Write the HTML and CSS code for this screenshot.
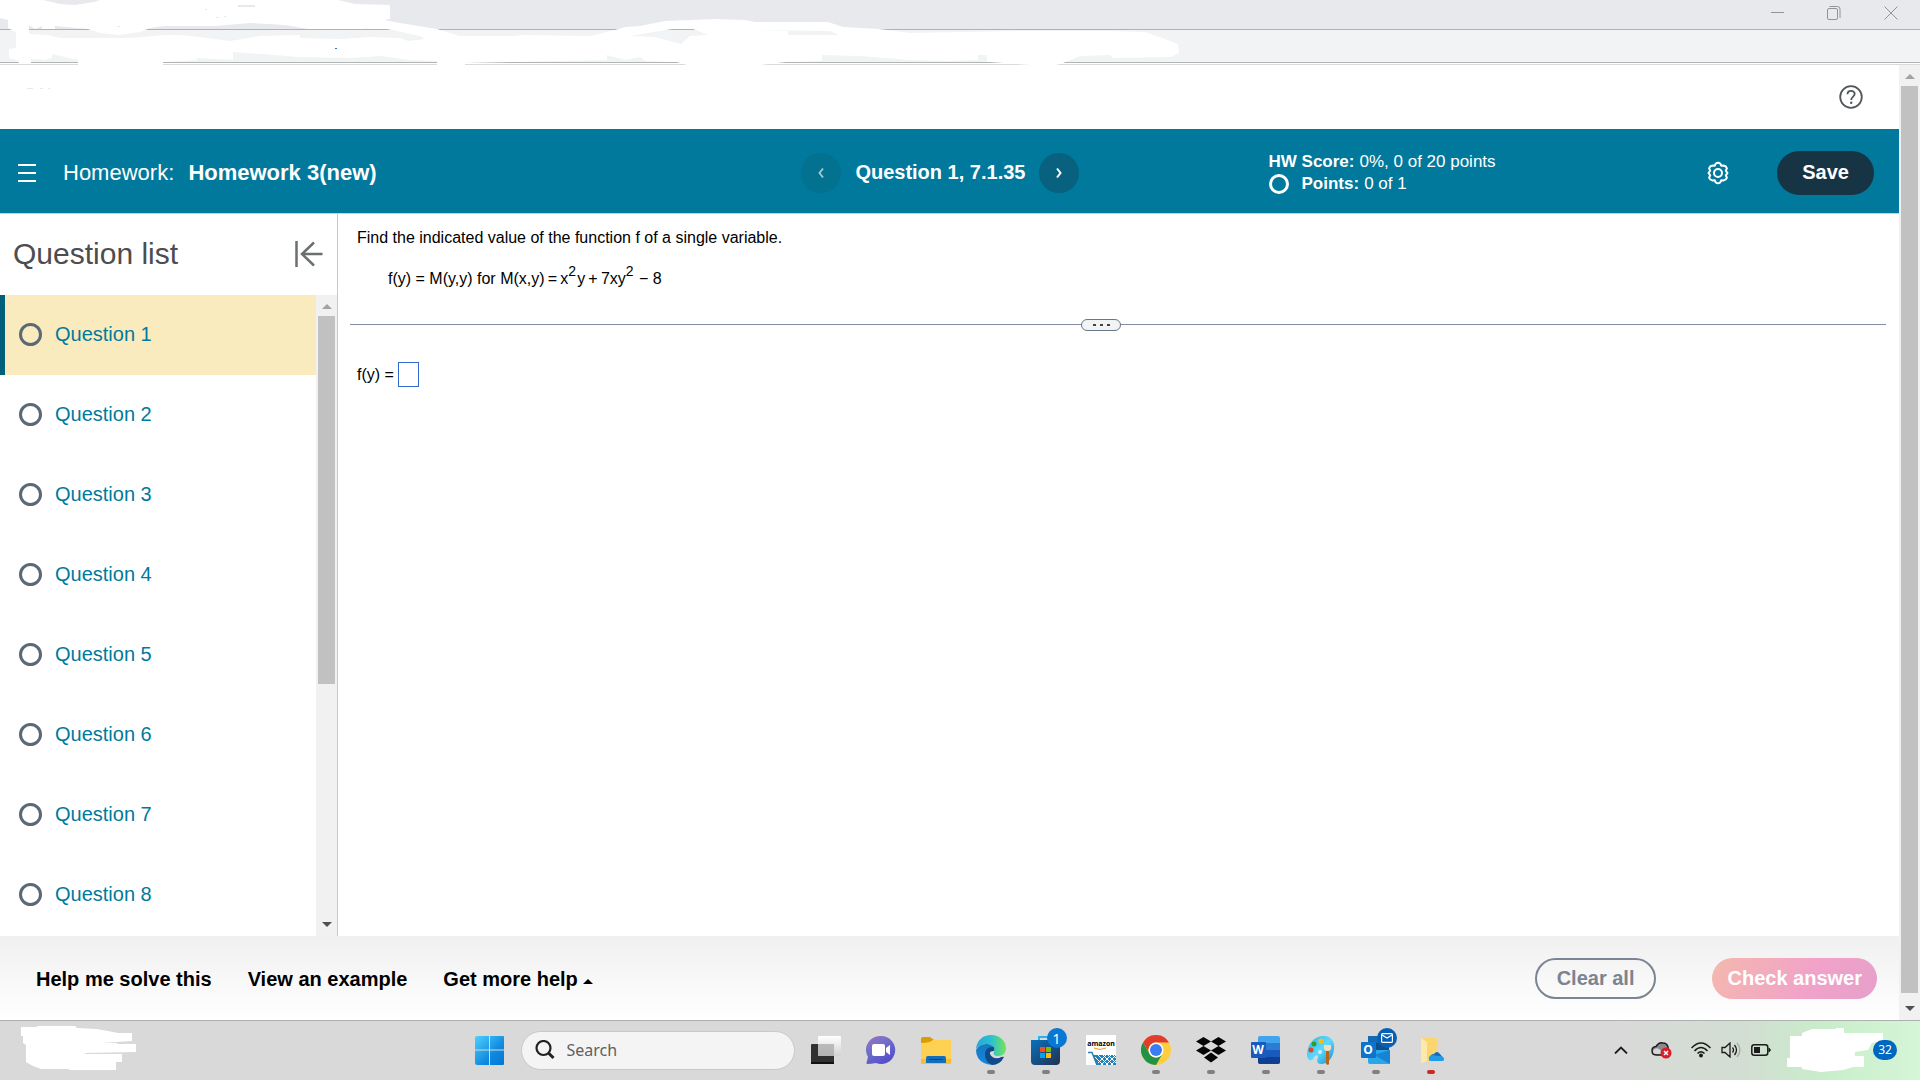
FILE: index.html
```html
<!DOCTYPE html>
<html lang="en">
<head>
    <meta charset="UTF-8">
    <meta name="viewport" content="width=device-width, initial-scale=1.0">
    <title>Homework 3(new)</title>
    <link rel="stylesheet" href="styles.css">
</head>
<body>

    <!-- Browser window -->
    <div class="browser">
        <div class="title-bar">
            <button class="win-btn" aria-label="Minimize"><svg width="14" height="14" viewBox="0 0 14 14"><path d="M1 6.500h13"/></svg></button>
            <button class="win-btn" aria-label="Restore"><svg width="14" height="14" viewBox="0 0 14 14"><rect x=".5" y="2.500" width="10" height="11" rx="1.500"/><path d="M2.500 .5h8q2.500 0 2.500 2.500v9"/></svg></button>
            <button class="win-btn" aria-label="Close"><svg width="14" height="14" viewBox="0 0 14 14"><path d="M.5 .5l13 13M13.500 .5l-13 13"/></svg></button>
        </div>
        <div class="tool-bar"></div>
        <svg class="paint" width="1200" height="95" viewBox="0 0 1200 95">
            <path fill="#fff" fill-rule="evenodd" d="M0 0H43L60 4 75 5 94 2 100 0H338L355 4 390 5V19L384 20 400 23 437 29 460 36H515L522 35 590 36 615 30 625 27 640 26 665 21 715 19 745 20 755 22H828L843 27 879 29 910 33 1020 31H1110L1145 32 1165 39 1178 44 1179 53 1170 57 1113 58 1110 55 1080 56 1063 63 1056 65H1030L990 62 975 60 950 61 910 60 860 56 822 55V61L786 62 760 65H687L677 62 646 61 640 57 625 60 607 55V60L560 61 465 63V65H437V61L410 60 380 56 350 58 300 57 233 52V60L197 58V60L163 62V65H78V60L52 54V58L45 60 31 59V63H19L17 60 9 58V49L16 48V32L8 28V20L0 18ZM29 25L35 29 42 26V29H55V26L88 29 100 33 120 35 140 32 150 28 165 26H215L250 23 285 25 308 29H368L360 26 367 29H387L420 36 425 39 408 41 400 38 370 37 340 39 300 38V35L260 36 230 41 200 37 180 35 165 35 130 38 60 38 48 35 29 34ZM672 29H693L708 35 690 36 681 44 655 37 630 36ZM757 30L830 31 839 35 788 35V31ZM978 55H987V61H978Z"/>
            <g fill="#e8e9ed">
                <rect x="205" y="9" width="2" height="1"/><rect x="238" y="5" width="17" height="2"/><rect x="216" y="17" width="3" height="1"/><rect x="224" y="16" width="2" height="1"/><rect x="117" y="26" width="3" height="1"/>
                <rect x="27" y="88" width="6" height="1"/><rect x="40" y="88" width="3" height="1"/><rect x="48" y="88" width="2" height="1"/>
            </g>
            <rect x="335" y="48" width="2" height="1" fill="#3b78b8"/>
        </svg>
    </div>

    <div class="viewport">
        <div class="page">

            <div class="top-bar">
                <button class="icon-btn" aria-label="Help">
                    <svg width="24" height="24" viewBox="0 0 24 24" fill="none" stroke="#505759" stroke-width="1.800"><circle cx="12" cy="12" r="10.800"/><path d="M8.500 9.300C8.500 4.800 15.700 4.800 15.700 9.100 15.700 11.600 12.200 11.800 12.200 15"/><circle cx="12.200" cy="17.800" r="1.200" fill="#505759" stroke="none"/></svg>
                </button>
            </div>

            <header class="header">
                <div class="header-left">
                    <button class="icon-btn" aria-label="Menu">
                        <svg width="19" height="18" viewBox="0 0 19 18" stroke="#fff" stroke-width="2"><path d="M0 1h18M0 9h18M0 17h18"/></svg>
                    </button>
                    <h1 class="title"><span>Homework:</span> <strong>Homework 3(new)</strong></h1>
                </div>
                <div class="question-nav">
                    <button class="nav-btn disabled" aria-label="Previous"><svg width="8" height="12" viewBox="0 0 8 12"><path d="M6 1.500L2.500 6 6 10.500"/></svg></button>
                    <strong>Question 1, 7.1.35</strong>
                    <button class="nav-btn" aria-label="Next"><svg width="8" height="12" viewBox="0 0 8 12"><path d="M2 1.500L5.500 6 2 10.500"/></svg></button>
                </div>
                <div class="score">
                    <p><strong>HW Score:</strong> 0%, 0 of 20 points</p>
                    <p><span class="ring"></span><strong>Points:</strong> 0 of 1</p>
                </div>
                <div class="header-right">
                    <button class="icon-btn" aria-label="Settings">
                        <svg width="24" height="24" viewBox="0 0 24 24" fill="none" stroke="#fff" stroke-width="2" stroke-linejoin="round"><path d="M9.800 2.500Q12 1 14.200 2.500L15.200 4.700 17.500 4.600Q20.200 5 20.900 7.300L19.800 9.700 21.500 12 19.800 14.300 20.900 16.700Q20.200 19 17.500 19.400L15.200 19.300 14.200 21.500Q12 23 9.800 21.500L8.800 19.300 6.500 19.400Q3.800 19 3.100 16.700L4.200 14.300 2.500 12 4.200 9.700 3.100 7.300Q3.800 5 6.500 4.600L8.800 4.700Z"/><circle cx="12" cy="12" r="4"/></svg>
                    </button>
                    <button class="save">Save</button>
                </div>
            </header>

            <div class="content">
                <aside class="sidebar">
                    <div class="sidebar-head">
                        <h2>Question list</h2>
                        <button class="icon-btn" aria-label="Collapse list">
                            <svg width="28" height="26" viewBox="0 0 28 26" fill="none" stroke="#6a7070" stroke-width="2.500"><path d="M1.500 0v26M27.500 13H7M19 1.500L7 13l12 11.500"/></svg>
                        </button>
                    </div>
                    <div class="list-wrap">
                        <ul class="questions">
                            <li class="active"><span class="ring"></span><a href="#">Question 1</a></li>
                            <li><span class="ring"></span><a href="#">Question 2</a></li>
                            <li><span class="ring"></span><a href="#">Question 3</a></li>
                            <li><span class="ring"></span><a href="#">Question 4</a></li>
                            <li><span class="ring"></span><a href="#">Question 5</a></li>
                            <li><span class="ring"></span><a href="#">Question 6</a></li>
                            <li><span class="ring"></span><a href="#">Question 7</a></li>
                            <li><span class="ring"></span><a href="#">Question 8</a></li>
                        </ul>
                        <div class="scrollbar list-scroll">
                            <span class="arrow up"></span>
                            <div class="track"><div class="thumb"></div></div>
                            <span class="arrow down"></span>
                        </div>
                    </div>
                </aside>

                <main class="exercise">
                    <p class="statement">Find the indicated value of the function f of a single variable.</p>
                    <p class="formula">f(y) = M(y,y) for M(x,y)&thinsp;=&thinsp;x<sup>2</sup>y&thinsp;+&thinsp;7xy<sup>2</sup> − 8</p>
                    <div class="divider">
                        <button class="handle" aria-label="Resize"><i></i><i></i><i></i></button>
                    </div>
                    <div class="answer">
                        <label for="answer">f(y) =</label>
                        <input type="text" id="answer">
                    </div>
                </main>
            </div>

            <footer class="footer">
                <div class="help-links">
                    <button>Help me solve this</button>
                    <button>View an example</button>
                    <button>Get more help <span class="caret"></span></button>
                </div>
                <div class="actions">
                    <button class="clear">Clear all</button>
                    <button class="check">Check answer</button>
                </div>
            </footer>
        </div>

        <div class="scrollbar page-scroll">
            <span class="arrow up"></span>
            <div class="track"><div class="thumb"></div></div>
            <span class="arrow down"></span>
        </div>
    </div>

    <!-- Taskbar -->
    <div class="taskbar">
        <div class="task-left">
            <svg width="116" height="46" viewBox="0 0 116 46"><path fill="#fff" d="M0 1H16V0H54L56 2 75 3 87 5 97 7H111V15L96 16 80 17H96V18H115V26L64 27V28H101V36H95V44H48V43H20L12 40 5 36V19L2 17V10H0Z"/></svg>
        </div>

        <div class="task-center">
            <button class="app" aria-label="Start">
                <svg width="30" height="30" viewBox="0 0 30 30">
                    <defs><linearGradient id="win" x1="0" y1="0" x2="30" y2="30" gradientUnits="userSpaceOnUse"><stop offset="0" stop-color="#4fd3ff"/><stop offset=".6" stop-color="#128ae0"/><stop offset="1" stop-color="#0075d3"/></linearGradient></defs>
                    <path fill="url(#win)" d="M2 1H14V14.500H0V3Q0 1 2 1ZM15 1H28Q29 1 29 2V14.500H15ZM0 15.500H14V30H2Q0 30 0 28ZM15 15.500H29V29Q29 30 28 30H15Z"/>
                </svg>
            </button>
            <label class="search">
                <svg width="20" height="20" viewBox="0 0 20 20" fill="none" stroke="#222" stroke-width="2.200"><circle cx="8.500" cy="8" r="7"/><path d="M13.500 13l5 5" stroke-width="3"/></svg>
                <input type="text" placeholder="Search" aria-label="Search">
            </label>
            <div class="apps">
                <button class="app" aria-label="Task view">
                    <svg width="30" height="30" viewBox="0 0 30 30">
                        <defs><linearGradient id="tv" x2="0" y2="1"><stop stop-color="#fff"/><stop offset="1" stop-color="#d2d2d2"/></linearGradient></defs>
                        <rect y="9" width="23" height="20" rx="1" fill="#30302e"/><rect y="27" width="23" height="2" fill="#111"/><rect x="7" y="1" width="23" height="20" rx="1" fill="url(#tv)"/><path fill="#aaa" d="M7 9h16v12H7z" opacity=".75"/>
                    </svg>
                </button>
                <button class="app" aria-label="Chat">
                    <svg width="30" height="30" viewBox="0 0 30 30">
                        <defs><linearGradient id="ch" x1="0" y1="0" x2=".6" y2="1"><stop stop-color="#a26fb8"/><stop offset=".4" stop-color="#7471cc"/><stop offset="1" stop-color="#5350c8"/></linearGradient></defs>
                        <path fill="url(#ch)" d="M15 1A14 14 0 1 1 10 28Q5 29 1 29 0 28 1 26L2 22A14 14 0 0 1 15 1Z"/><rect x="6" y="9" width="13" height="12" rx="2" fill="#fff"/><path d="M20 13l4-3v10l-4-3z" fill="#fff"/>
                    </svg>
                </button>
                <button class="app" aria-label="File Explorer">
                    <svg width="30" height="30" viewBox="0 0 30 30">
                        <path fill="#dc9c00" d="M0 4Q0 2 2 2H9L13 5V10H0Z"/><path fill="#ffd153" d="M0 8Q9 8 12 5H29Q30 5 30 6V28H0Z"/><path fill="#f7bc30" d="M0 24h30v4q0 1-1 1H1q-1 0-1-1z"/><path fill="#116fbd" d="M5 23Q5 21 7 21H23Q25 21 25 23V28H5Z"/><rect x="8" y="24" width="14" height="1" fill="#0d437c"/>
                    </svg>
                </button>
                <button class="app running" aria-label="Edge">
                    <svg width="30" height="30" viewBox="0 0 30 30">
                        <defs><linearGradient id="ed"><stop stop-color="#24a8de"/><stop offset=".5" stop-color="#29c0d3"/><stop offset="1" stop-color="#75e552"/></linearGradient><linearGradient id="eb" x2="0" y2="1"><stop stop-color="#147bbd"/><stop offset="1" stop-color="#1684e3"/></linearGradient></defs>
                        <path fill="url(#ed)" d="M0 14C1 5 7 0 15 0 24 0 30 6 30 13 30 18 27 21 22 21 18 21 17 19 18 17 20 12 15 9 10 9Q4 9 0 14Z"/>
                        <path fill="url(#eb)" d="M0 15Q3 9 10 9C16 9 20 13 18 16Q16 12 12 15 9 18 12 24 15 29 20 29 14 31 8 28 0 24 0 15Z"/>
                        <path fill="#114a8b" d="M18 12Q9 11 9 20 9 27 16 30 24 30 28 22 27 21 23 23 16 24 14 19 13 16 18 16Z"/>
                    </svg>
                </button>
                <button class="app running" aria-label="Microsoft Store">
                    <svg width="30" height="30" viewBox="0 0 30 30">
                        <defs><linearGradient id="st" x2="1" y2="1"><stop stop-color="#0872bd"/><stop offset="1" stop-color="#22304f"/></linearGradient></defs>
                        <path fill="none" stroke="#23b7ed" stroke-width="2" d="M8 7V2h12v5"/><path fill="url(#st)" d="M0 5H29V26Q29 30 25 30H4Q0 30 0 26Z"/><path fill="#f25022" d="M9 12h5v5H9z"/><path fill="#7fba00" d="M15 12h5v5h-5z"/><path fill="#00a4ef" d="M9 18h5v5H9z"/><path fill="#ffb900" d="M15 18h5v5h-5z"/>
                    </svg>
                    <span class="badge">1</span>
                </button>
                <button class="app" aria-label="Amazon">
                    <svg width="30" height="30" viewBox="0 0 30 30">
                        <rect width="30" height="30" fill="#fff"/><text class="amazon-text" x="15" y="11" text-anchor="middle">amazon</text><path d="M8 13q6 3 12 0" fill="none" stroke="#f59b22"/><path d="M2 17.500h4l5 12.500" fill="none" stroke="#2780b6" stroke-width="1.500"/><path fill="#2780b6" d="M7 20h23v10H11z"/><path d="M9 22l8 8M12 20l10 10M17 20l10 10M22 20l8 8M27 20l3 3M12 28l8-8M15 30l10-10M20 30l10-10M25 30l5-5" stroke="#fff"/>
                    </svg>
                </button>
                <button class="app running" aria-label="Chrome">
                    <svg width="30" height="30" viewBox="0 0 30 30">
                        <circle cx="15" cy="15" r="15" fill="#ffcd40"/><path fill="#e33b2e" d="M2 7.500A15 15 0 0 1 28 7.500H15A7.500 7.500 0 0 0 8.500 18.750Z"/><path fill="#229342" d="M2 7.500A15 15 0 0 0 15 30L21.500 18.750A7.500 7.500 0 0 1 8.500 18.750Z"/><circle cx="15" cy="15" r="7.500" fill="#fff"/><circle cx="15" cy="15" r="6" fill="#3a7df0"/>
                    </svg>
                </button>
                <button class="app running" aria-label="Dropbox">
                    <svg width="30" height="30" viewBox="0 0 30 30"><path d="M7.500 2L15 6.500 7.500 11 0 6.500ZM22.500 2L30 6.500 22.500 11 15 6.500ZM7.500 11L15 15.500 7.500 20 0 15.500ZM22.500 11L30 15.500 22.500 20 15 15.500ZM15 17.500L22 22.500 15 27.500 8 22.500Z" fill="#050505"/></svg>
                </button>
                <button class="app running" aria-label="Word">
                    <svg width="30" height="30" viewBox="0 0 30 30"><rect x="7" y="1" width="22" height="28" rx="2" fill="#41a5ee"/><path fill="#2b7cd3" d="M7 8h22v7H7z"/><path fill="#185abd" d="M7 15h22v7H7z"/><path fill="#103f91" d="M7 22h22v5q0 2-2 2H9q-2 0-2-2z"/><rect y="7" width="15" height="16" rx="1" fill="#185abd"/><text class="office-text" x="7" y="19" text-anchor="middle">W</text></svg>
                </button>
                <button class="app running" aria-label="Paint">
                    <svg width="30" height="30" viewBox="0 0 30 30">
                        <defs><linearGradient id="pa" x2="1" y2="1"><stop stop-color="#2ab4e8"/><stop offset=".5" stop-color="#5fd9fb"/><stop offset="1" stop-color="#168dcd"/></linearGradient></defs>
                        <path fill="url(#pa)" d="M18 1C26 1 29 8 28 14 27 23 22 29 15 29 10 29 11 25 12 22 12 19 9 20 7 24 5 27 1 25 1 20 1 9 8 1 18 1Z"/><circle cx="15" cy="6" r="2.500" fill="#f7bd21"/><circle cx="8" cy="9" r="2.500" fill="#2ba12a"/><circle cx="5" cy="15" r="2.500" fill="#da4928"/><circle cx="14" cy="17" r="2" fill="#c8f2fb"/><path fill="#f2dcc1" d="M18 10h7v4l-2 2h-3l-2-2z"/><path fill="#b8651b" d="M20 16h3v13l-1 1-2-1z"/>
                    </svg>
                </button>
                <button class="app running" aria-label="Outlook">
                    <svg width="30" height="30" viewBox="0 0 30 30"><rect x="7" y="1" width="21" height="20" fill="#126bb3"/><path fill="#0f4f8c" d="M14 8h14v10H14z"/><path fill="#28a8ea" d="M7 15l22 0v12q0 2-2 2H9q-2 0-2-2z"/><path fill="#1684d3" d="M29 15v14L13 20z"/><rect y="7" width="15" height="16" rx="1" fill="#0f73cc"/><text class="office-text" x="7" y="19" text-anchor="middle">O</text></svg>
                    <span class="badge mail"><svg width="12" height="10" viewBox="0 0 12 10" fill="none" stroke="#fff" stroke-width="1.200"><rect x=".6" y=".6" width="10.800" height="8.800" rx="1"/><path d="M1 2l5 3 5-3"/></svg></span>
                </button>
                <button class="app alert" aria-label="OneDrive">
                    <svg width="30" height="30" viewBox="0 0 30 30"><path fill="#fbd56d" d="M6 3h15v23H6z"/><path fill="#ffe9a9" d="M5 3l6 4v18q0 2-2 2l-4 1z"/><path fill="#0f6cbf" d="M14 24q0-5 4-5 3-4 6 0l4 5z"/><path fill="#229ae7" d="M13 25q-1-5 4-5 4 1 7 1 4 0 4 4 0 1-2 1H15q-2 0-2-1z"/></svg>
                </button>
            </div>
        </div>

        <div class="tray">
            <svg width="14" height="8" viewBox="0 0 14 8" fill="none" stroke="#1b1b1b" stroke-width="1.800"><path d="M1 7.500L7 1.500l6 6"/></svg>
            <svg width="21" height="18" viewBox="0 0 21 18"><path fill="#8a8a8a" stroke="#1c1c1c" stroke-width="1.400" d="M5 14Q1 14 1 9.500 1 6 5 5.500 8 1 12 2q4 0 5 4l1 8z"/><path fill="#d7d7d7" d="M2 10q2-4 6-2l6 5H5Q2 13 2 10z"/><circle cx="15" cy="12" r="5.500" fill="#d71f2c"/><path stroke="#fff" stroke-width="1.500" d="M13 10l4 4M17 10l-4 4"/></svg>
            <svg width="20" height="16" viewBox="0 0 20 16" fill="none" stroke="#1b1b1b" stroke-width="1.500"><path d="M.5 6Q10-4 19.500 6M3.500 9Q10 2 16.500 9M6.500 11.500Q10 8 13.500 11.500"/><circle cx="10" cy="13.500" r="1.200" fill="#1b1b1b"/></svg>
            <svg width="20" height="16" viewBox="0 0 20 16" fill="none" stroke="#1b1b1b" stroke-width="1.300"><path d="M1 5.500h3L9 1v14l-5-4.500H1zM11.500 5.500q2 2.500 0 5M13.500 3q4 5 0 10"/><path d="M16 1q6 7 0 14" stroke="#aaa"/></svg>
            <svg width="20" height="12" viewBox="0 0 20 12"><rect x=".8" y=".8" width="16" height="10.400" rx="2.500" fill="none" stroke="#1b1b1b" stroke-width="1.500"/><path d="M3 3h6v6H3zM17.500 4h1l1.500 2-1.500 2h-1z" fill="#1b1b1b"/></svg>
            <div class="clock">
                <svg width="97" height="44" viewBox="0 0 97 44"><path fill="#fff" d="M3 8H15V5L25 1H49V0H57V5H96V13L85 15 81 22 68 24V28H77V39H66L56 42 34 44 15 41V39H0V30H3Z"/></svg>
                <span class="notif">32</span>
            </div>
        </div>
    </div>

</body>
</html>
```
FILE: styles.css
```css
* {
    box-sizing: border-box;
}

body {
    display: flex;
    flex-direction: column;
    height: 100vh;
    margin: 0;
    overflow: hidden;
    font-family: "Liberation Sans", Arial, sans-serif;
    font-size: 20px;
    background-color: #fff;
}

h1, h2, p, ul {
    margin: 0;
    padding: 0;
}

button {
    padding: 0;
    border: none;
    background: none;
    font: inherit;
    color: inherit;
    cursor: pointer;
}

svg {
    display: block;
}

/* Browser window */
.browser {
    position: relative;
    border-bottom: 1px solid #d9dbda;
}

.title-bar {
    display: flex;
    justify-content: flex-end;
    align-items: center;
    gap: 43px;
    height: 30px;
    padding: 0 22px 3px;
    background-color: #e8e9ed;
    border-bottom: 1px solid #b1b3b3;
}

.win-btn svg {
    fill: none;
    stroke: #929498;
}

.tool-bar {
    height: 33px;
    margin-bottom: 1px;
    background-color: #f1f3f4;
    border-bottom: 1px solid #b0b5b3;
}

.paint {
    position: absolute;
    top: 0;
    left: 0;
}

.viewport {
    display: flex;
    flex: 1;
    min-height: 0;
}

.page {
    display: flex;
    flex: 1;
    flex-direction: column;
    min-width: 0;
}

.top-bar {
    display: flex;
    justify-content: flex-end;
    align-items: center;
    height: 64px;
    padding-right: 36px;
}

/* Header */
.header {
    display: grid;
    grid-template-columns: 42.2% 24.6% 1fr auto;
    align-items: center;
    height: 85px;
    padding-top: 3px;
    background-color: #00799c;
    border-bottom: 1px solid #c2d3df;
    color: #fff;
}

.header-left {
    display: flex;
    align-items: center;
    gap: 26px;
    padding-left: 18px;
}

.title {
    font-size: 22px;
    font-weight: normal;
}

.title span {
    margin-right: 8px;
}

.question-nav {
    display: flex;
    align-items: center;
    gap: 14px;
}

.nav-btn {
    display: flex;
    align-items: center;
    justify-content: center;
    width: 40px;
    height: 40px;
    border-radius: 50%;
    background-color: #08627f;
}

.nav-btn svg {
    fill: none;
    stroke: #fff;
    stroke-width: 2;
}

.nav-btn.disabled {
    background-color: #037190;
}

.nav-btn.disabled svg {
    opacity: 0.6;
}

.score {
    font-size: 17px;
    line-height: 22px;
}

.score p {
    display: flex;
    align-items: center;
    gap: 5px;
}

.ring {
    width: 23px;
    height: 23px;
    border: 3px solid #5c6875;
    border-radius: 50%;
}

.score .ring {
    width: 20px;
    height: 20px;
    margin-right: 8px;
    border-color: #fff;
}

.header-right {
    display: flex;
    align-items: center;
    gap: 47px;
    padding-right: 25px;
}

.save {
    height: 44px;
    padding: 0 25px;
    border-radius: 22px;
    background-color: #173445;
    font-weight: bold;
}

.content {
    display: flex;
    flex: 1;
    min-height: 0;
}

/* Question list */
.sidebar {
    display: flex;
    flex-direction: column;
    width: 338px;
    border-right: 1px solid #c7c9d1;
}

.sidebar-head {
    display: flex;
    justify-content: space-between;
    align-items: center;
    height: 81px;
    padding: 0 14px 2px 13px;
    color: #4d4d4f;
}

.sidebar-head h2 {
    font-size: 30px;
    font-weight: normal;
}

.list-wrap {
    display: flex;
    flex: 1;
    min-height: 0;
}

.questions {
    flex: 1;
    overflow: hidden;
    list-style: none;
}

.questions li {
    display: flex;
    align-items: center;
    gap: 13px;
    height: 80px;
    padding: 0 0 2px 14px;
    border-left: 5px solid transparent;
}

.questions li.active {
    border-left-color: #00607a;
    background-color: #f9ebbe;
}

.questions a {
    color: #007a9c;
    text-decoration: none;
}

/* Scrollbars */
.scrollbar {
    display: flex;
    flex-direction: column;
    align-items: center;
    width: 21px;
    background-color: #f1f1f1;
}

.track {
    flex: 1;
    width: 17px;
}

.thumb {
    height: 62%;
    background-color: #c1c1c1;
}

.page-scroll .thumb {
    height: 100%;
}

.arrow {
    margin: 9px 0 7px;
    border: 5px solid transparent;
    border-top-width: 0;
    border-bottom: 5px solid #a3a3a3;
}

.arrow.down {
    margin: 13px 0 9px;
    border-top: 5px solid #505050;
    border-bottom-width: 0;
}

/* Exercise */
.exercise {
    flex: 1;
    padding: 15px 13px 0 12px;
    font-size: 16px;
    line-height: 18px;
    color: #000;
}

.statement {
    padding-left: 7px;
}

.formula {
    padding: 23px 0 0 38px;
}

.formula sup {
    margin-right: 1px;
    font-size: 14px;
    line-height: 0;
    vertical-align: 8px;
}

.divider {
    position: relative;
    margin-top: 36px;
    border-top: 1px solid #858ba5;
}

.handle {
    position: absolute;
    top: -6px;
    left: calc(50% - 37px);
    display: flex;
    justify-content: center;
    align-items: center;
    gap: 4px;
    width: 40px;
    height: 12px;
    border: 1px solid #697786;
    border-radius: 6px;
    background-color: #f1f3f5;
}

.handle i {
    width: 3px;
    height: 2px;
    background-color: #444;
}

.answer {
    display: flex;
    align-items: center;
    gap: 4px;
    margin-top: 37px;
    padding-left: 7px;
}

.answer input {
    width: 21px;
    height: 25px;
    padding: 0;
    border: 1px solid #3069cf;
    font: inherit;
}

/* Footer */
.footer {
    display: flex;
    justify-content: space-between;
    align-items: center;
    height: 84px;
    padding: 0 22px 0 36px;
    background: linear-gradient(#f0f0f0, #fff);
    font-weight: bold;
}

.help-links {
    display: flex;
    gap: 36px;
    padding-top: 2px;
}

.caret {
    display: inline-block;
    border: 5px solid transparent;
    border-top-width: 0;
    border-bottom-color: #000;
    vertical-align: 2px;
}

.actions {
    display: flex;
    gap: 56px;
}

.clear, .check {
    height: 41px;
    padding: 0 20px;
    border-radius: 21px;
}

.clear {
    border: 2px solid #7b8492;
    color: #7b8492;
}

.check {
    padding: 0 15px;
    background: linear-gradient(115deg, #f4b8ae, #f1a2c9 60%, #e5a0ca);
    color: #fff;
}

/* Taskbar */
.taskbar {
    display: grid;
    grid-template-columns: 1fr auto 1fr;
    align-items: center;
    height: 60px;
    padding-bottom: 1px;
    border-top: 1px solid #aeb0af;
    background: linear-gradient(90deg, #d9d9d9 84%, #d2ded2 91%, #c9edca 95%, #d5f6d7);
}

.task-left {
    padding: 0 0 3px 21px;
}

.task-center {
    display: flex;
    align-items: center;
}

.search {
    display: flex;
    align-items: center;
    gap: 12px;
    width: 274px;
    height: 39px;
    margin: 0 16px;
    padding: 0 13px;
    border: 1px solid #c8c8c8;
    border-radius: 20px;
    background-color: #f4f4f4;
}

.search input {
    flex: 1;
    min-width: 0;
    padding: 0;
    border: none;
    background: none;
    font-family: "Noto Sans", "Open Sans", sans-serif;
    font-size: 16px;
}

.search input::placeholder {
    color: #606060;
}

.apps {
    display: flex;
    gap: 25px;
}

.app {
    position: relative;
    width: 30px;
    height: 30px;
}

.running::after, .alert::after {
    content: "";
    position: absolute;
    bottom: -9px;
    left: 11px;
    width: 8px;
    height: 4px;
    border-radius: 2px;
    background-color: #808080;
}

.alert::after {
    background-color: #c92b20;
}

.badge {
    position: absolute;
    top: -7px;
    right: -6px;
    display: flex;
    align-items: center;
    justify-content: center;
    width: 20px;
    height: 20px;
    border-radius: 50%;
    background-color: #0878d4;
    color: #fff;
    font-family: "Noto Sans", sans-serif;
    font-size: 14px;
}

.mail {
    background-color: #0560b6;
}

.amazon-text {
    font: bold 7px "Open Sans", sans-serif;
}

.office-text {
    font: bold 12px "Open Sans", sans-serif;
    fill: #fff;
}

.tray {
    display: flex;
    justify-content: flex-end;
    align-items: center;
    padding-right: 23px;
}

.tray > svg {
    margin-right: 10px;
}

.tray > svg:first-child {
    margin-right: 23px;
}

.tray > svg:nth-child(2) {
    margin-right: 19px;
}

.clock {
    display: flex;
    align-items: center;
    margin-left: 6px;
}

.notif {
    width: 24px;
    height: 20px;
    margin-left: -11px;
    border-radius: 10px;
    background-color: #0067c0;
    color: #fff;
    font-family: "Noto Sans", sans-serif;
    font-size: 12px;
    line-height: 20px;
    text-align: center;
}
```
